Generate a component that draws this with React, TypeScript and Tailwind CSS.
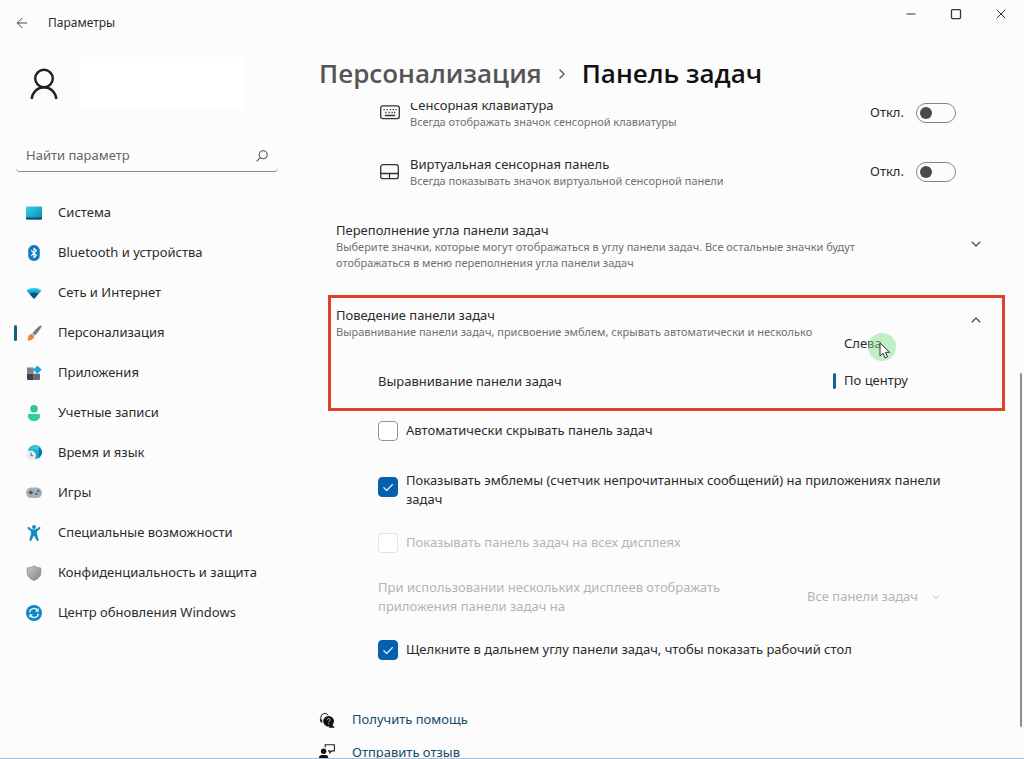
import React, { useState } from 'react'
import { ArrowLeft, ChevronDown, ChevronRight, ChevronUp, Minus, Square, X } from 'lucide-react'

type IconProps = { className?: string }

const SystemIcon = () => (
  <svg viewBox="0 0 16 16" className="size-4">
    <defs>
      <linearGradient id="sys" x1="0" y1="0" x2="1" y2="1">
        <stop offset="0" stopColor="#30d3e6" />
        <stop offset="1" stopColor="#0a86b4" />
      </linearGradient>
    </defs>
    <rect x="0" y="1.5" width="16" height="13" rx="1" fill="url(#sys)" />
    <path d="M0 12.5h16v1a1 1 0 0 1-1 1H1a1 1 0 0 1-1-1z" fill="#0b4f73" />
  </svg>
)

const BluetoothIcon = () => (
  <svg viewBox="0 0 16 16" className="size-4">
    <rect x="2.2" y="0" width="11.6" height="16" rx="5.6" fill="#0c7cc4" />
    <path d="M5.2 5.4l5.3 5L8 12.7V3.3l2.5 2.3-5.3 5" fill="none" stroke="#fff" strokeWidth="1.1" strokeLinejoin="round" />
  </svg>
)

const NetworkIcon = () => (
  <svg viewBox="0 0 16 16" className="size-4">
    <defs>
      <linearGradient id="net" x1="0" y1="0" x2="0" y2="1">
        <stop offset="0" stopColor="#45dcf2" />
        <stop offset=".45" stopColor="#1397cb" />
        <stop offset="1" stopColor="#0a4a80" />
      </linearGradient>
    </defs>
    <path d="M.4 5.600C4.600 1.700 11.400 1.700 15.600 5.600L8.600 13.200a.9.9 0 0 1-1.200 0z" fill="url(#net)" />
    <path d="M3.800 9.100c2.500-1.900 5.900-1.900 8.400 0l-3.600 4.100a.9.9 0 0 1-1.200 0z" fill="#0b5288" />
  </svg>
)

const BrushIcon = () => (
  <svg viewBox="0 0 16 16" className="size-4">
    <path d="M14.200.6c1-.5 1.700.2 1.200 1.200-1.400 2.900-3.500 5.900-6.200 8.400L6.600 7.900C9 5.100 11.600 2.200 14.200.600z" fill="#737d87" />
    <path d="M6.600 7.900l2.600 2.300-1.200 1-2.500-2.200z" fill="#b5bcc2" />
    <path d="M5.600 8.900l2.500 2.300c0 3-3.200 4.700-7.400 4.100 1.500-.900 1.200-2.200 1.700-3.900.5-1.500 1.700-2.400 3.200-2.500z" fill="#ec8332" />
  </svg>
)

const AppsIcon = () => (
  <svg viewBox="0 0 16 16" className="size-4">
    <path d="M1 2.500h6.700v6.200H1z" fill="#7c838a" />
    <path d="M1 8.700h6.700V15H2a1 1 0 0 1-1-1z" fill="#3b434b" />
    <path d="M7.700 8.700H14V14a1 1 0 0 1-1 1H7.700z" fill="#646c74" />
    <path d="M11.400.5l4.200 4.200-4.200 4.200-4.200-4.200z" fill="#1ca7dc" />
  </svg>
)

const AccountsIcon = () => (
  <svg viewBox="0 0 16 16" className="size-4">
    <circle cx="8" cy="3.800" r="3.800" fill="#2fc79a" />
    <path d="M1.800 10.500c0-.9.700-1.500 1.500-1.500h9.400c.8 0 1.500.600 1.500 1.500 0 3.500-2.600 5.500-6.200 5.500s-6.200-2-6.200-5.500z" fill="#27d29c" />
  </svg>
)

const TimeIcon = () => (
  <svg viewBox="0 0 16 16" className="size-4">
    <circle cx="9" cy="7" r="7" fill="#15a5c4" />
    <path d="M9 0a7 7 0 0 1 7 7c0 2.800-1.600 5.200-4 6.300.5-3-1-4.300-.5-6.300.4-1.900-2.300-2.500-4.500-2.600-1.300 0-2.600-.3-3.400-.9A7 7 0 0 1 9 0z" fill="#36c6d8" />
    <path d="M13 2l3 4c.2 3-1.400 6-4 7.300z" fill="#0d76b3" />
    <circle cx="5" cy="10.500" r="5" fill="#e9eef1" />
    <path d="M5 7.500v3.300h2.300" fill="none" stroke="#4c5a66" strokeWidth="1" />
  </svg>
)

const GamesIcon = () => (
  <svg viewBox="0 0 16 16" className="size-4">
    <rect x="0" y="2.500" width="16" height="10.500" rx="5.200" fill="#a5afb9" />
    <path d="M4.800 5.500v4M2.800 7.500h4" stroke="#3f474f" strokeWidth="1.300" />
    <circle cx="12.300" cy="6" r="1.100" fill="#35506a" />
    <circle cx="10.500" cy="9" r="1.100" fill="#48515a" />
  </svg>
)

const AccessibilityIcon = () => (
  <svg viewBox="0 0 16 16" className="size-4">
    <circle cx="8" cy="2.100" r="2" fill="#168cc0" />
    <path
      d="M1.700 2.500c.5-.8 1.200-.6 1.900-.1C4.800 3.500 6.200 4.400 8 4.400s3.200-.9 4.400-2c.7-.5 1.400-.7 1.900.1.400.7 0 1.200-.6 1.700L11 6.300v2.800l1.600 5.300c.2.800-.1 1.300-.7 1.500-.7.200-1.200-.2-1.500-.9L8 10.600 5.600 15c-.3.700-.8 1.100-1.500.9-.6-.2-.9-.7-.7-1.500L5 9.100V6.300L2.300 4.200c-.6-.5-1-1-.6-1.700z"
      fill="#168cc0"
    />
  </svg>
)

const PrivacyIcon = () => (
  <svg viewBox="0 0 16 16" className="size-4">
    <defs>
      <linearGradient id="shield" x1="0" y1="0" x2="1" y2="1">
        <stop offset="0" stopColor="#c9cccd" />
        <stop offset="1" stopColor="#7c8185" />
      </linearGradient>
    </defs>
    <path
      d="M8 .8c2 1.500 4.200 2.100 6.800 2.200v4.500c0 3.900-2.600 6.200-6.800 8-4.200-1.800-6.800-4.100-6.800-8V3C3.800 2.900 6 2.300 8 .8z"
      fill="url(#shield)"
      stroke="#85898c"
      strokeWidth=".8"
    />
  </svg>
)

const UpdateIcon = () => (
  <svg viewBox="0 0 16 16" className="size-4">
    <circle cx="8" cy="8" r="8" fill="#0e86c6" />
    <path d="M3.600 7.400A4.500 4.500 0 0 1 11.800 5.500M12.400 8.600A4.500 4.500 0 0 1 4.200 10.500" fill="none" stroke="#d9f4ff" strokeWidth="1.500" />
    <path d="M12.700 3v3.700H9zM3.300 13V9.300H7z" fill="#d9f4ff" />
  </svg>
)

const UserIcon = ({ className }: IconProps) => (
  <svg viewBox="0 0 28 32" className={className} fill="none" stroke="#1f1f1f" strokeWidth="2.400">
    <circle cx="14" cy="10.500" r="8.800" />
    <path d="M1.600 31c.8-6.500 5.800-11.700 12.400-11.700S25.600 24.500 26.400 31" />
  </svg>
)

const SearchIcon = ({ className }: IconProps) => (
  <svg viewBox="0 0 12 12" className={className} fill="none" stroke="#555" strokeWidth="1.100" strokeLinecap="round">
    <circle cx="7.200" cy="4.700" r="4" />
    <path d="M4.200 7.700L.9 11.200" />
  </svg>
)

const KeyboardIcon = () => (
  <svg viewBox="0 0 20 16" className="h-4 w-5" fill="none" stroke="#333" strokeWidth="1.300">
    <rect x=".7" y=".8" width="18.600" height="12.800" rx="2" />
    <path d="M3.500 4.600h1.300M6.700 4.600H8M9.900 4.600h1.300M12.700 4.600H14M15.400 4.600h1.200M5.200 7.500h1.300M8.500 7.500h1.300M11.500 7.500h1.300M14 7.500h1.300M4.800 10.500h10.400" />
  </svg>
)

const TouchpadIcon = () => (
  <svg viewBox="0 0 20 16" className="h-4 w-5" fill="none" stroke="#333" strokeWidth="1.300">
    <rect x=".7" y=".7" width="17.600" height="14" rx="2.300" />
    <path d="M.7 9.500h17.600M9.500 9.500v5" />
  </svg>
)

const HelpIcon = () => (
  <svg viewBox="0 0 16 16" className="size-4">
    <path d="M1.800 9V5.500a4 4 0 0 1 7.500-2" fill="none" stroke="#222" strokeWidth="1" />
    <path d="M.6 7.500h2.600v3.300H2z" fill="#222" />
    <circle cx="9.600" cy="9.300" r="5.400" fill="#111" />
    <path d="M12.500 12l3.300 3.800h-6z" fill="#111" />
    <path d="M8.200 7.900c0-2 3-1.900 3-.1 0 1.200-1.500 1.100-1.500 2.300M9.700 11.200v1.100" fill="none" stroke="#ccc" strokeWidth="1" />
  </svg>
)

const FeedbackIcon = () => (
  <svg viewBox="0 0 16 18" className="h-[18px] w-4">
    <path d="M6.200 3.500V.7h9.200v6.200h-2.600l-2 2v-2H9" fill="none" stroke="#222" strokeWidth="1.100" />
    <circle cx="4.600" cy="7.200" r="2.700" fill="#111" />
    <path d="M0 18v-4A3 3 0 0 1 3 11h3.300a3 3 0 0 1 3 3v4z" fill="#111" />
  </svg>
)

const CursorIcon = ({ className }: IconProps) => (
  <svg viewBox="0 0 12 17" className={className}>
    <path d="M1 1v13l3-2.800 2 4.700 2.500-1-2-4.600h4.200z" fill="#fff" stroke="#333" strokeWidth="1" strokeLinejoin="round" />
  </svg>
)

const navItems = [
  { label: 'Система', icon: SystemIcon },
  { label: 'Bluetooth и устройства', icon: BluetoothIcon },
  { label: 'Сеть и Интернет', icon: NetworkIcon },
  { label: 'Персонализация', icon: BrushIcon, active: true },
  { label: 'Приложения', icon: AppsIcon },
  { label: 'Учетные записи', icon: AccountsIcon },
  { label: 'Время и язык', icon: TimeIcon },
  { label: 'Игры', icon: GamesIcon },
  { label: 'Специальные возможности', icon: AccessibilityIcon },
  { label: 'Конфиденциальность и защита', icon: PrivacyIcon },
  { label: 'Центр обновления Windows', icon: UpdateIcon },
]

const TitleBar = () => (
  <header className="flex h-[46px] shrink-0 items-start justify-between">
    <div className="flex h-full items-center gap-[18px] pl-3.5">
      <button aria-label="Назад">
        <ArrowLeft className="size-4 text-[#444]" strokeWidth={1.5} />
      </button>
      <span className="text-xs">Параметры</span>
    </div>
    <div className="flex h-7 pr-px text-[#333]">
      <button aria-label="Свернуть" className="flex w-[45px] items-center justify-center">
        <Minus className="size-3.5" strokeWidth={1.8} />
      </button>
      <button aria-label="Развернуть" className="flex w-[45px] items-center justify-center">
        <Square className="size-3" strokeWidth={2.5} />
      </button>
      <button aria-label="Закрыть" className="flex w-[45px] items-center justify-center">
        <X className="size-4" strokeWidth={1.5} />
      </button>
    </div>
  </header>
)

const Sidebar = () => (
  <aside className="flex w-[300px] shrink-0 flex-col pl-3.5 pr-[22px]">
    <div className="mt-[11px] flex h-[53px] items-center pl-4">
      <UserIcon className="h-8 w-7" />
      <div className="ml-[22px] h-full w-[165px] bg-white" />
    </div>
    <div className="ml-0.5 mt-[30px] flex h-8 items-center rounded-b border-b border-[#8a8a8a] pl-2.5 pr-2.5">
      <input
        type="search"
        aria-label="Найти параметр"
        placeholder="Найти параметр"
        className="min-w-0 flex-1 bg-transparent outline-none placeholder:text-[#666]"
      />
      <SearchIcon className="size-3" />
    </div>
    <nav className="mt-[21px]">
      {navItems.map(({ label, icon: Icon, active }) => (
        <a key={label} href="#" className="flex h-10 items-center">
          <span className={active ? 'h-4 w-[3px] rounded bg-[#14607f]' : 'h-4 w-[3px]'} />
          <span className="ml-[9px] mr-4">
            <Icon />
          </span>
          {label}
        </a>
      ))}
    </nav>
  </aside>
)

type ToggleRowProps = { icon: React.ReactNode; title: string; text: string }

const ToggleRow: React.FC<ToggleRowProps> = ({ icon, title, text }) => (
  <label className="flex h-[59px] items-center pl-[52px] pr-12">
    {icon}
    <span className="ml-2.5 flex flex-1 flex-col">
      <span className="leading-[18px]">{title}</span>
      <span className="text-[11px] leading-4 text-[#707070]">{text}</span>
    </span>
    <span className="mr-3">Откл.</span>
    <input
      type="checkbox"
      role="switch"
      className="flex h-5 w-10 appearance-none items-center rounded-full border border-[#858585] px-[3px] before:size-3 before:rounded-full before:bg-[#4b4b4b] checked:justify-end"
    />
  </label>
)

type CheckRowProps = { label: string; checked?: boolean; disabled?: boolean; twoLines?: boolean }

const CheckRow: React.FC<CheckRowProps> = ({ label, checked, disabled, twoLines }) => (
  <label className={disabled ? 'flex gap-2 text-[#b4b4b4]' : 'flex gap-2'}>
    <span className={twoLines ? 'mt-1.5 grid size-5 shrink-0' : 'grid size-5 shrink-0'}>
      <input
        type="checkbox"
        defaultChecked={checked}
        disabled={disabled}
        className="peer col-start-1 row-start-1 size-5 appearance-none rounded border border-[#949494] bg-white checked:border-[#0560ae] checked:bg-[#0560ae] disabled:border-[#e2e2e2]"
      />
      <svg viewBox="0 0 20 20" className="pointer-events-none invisible col-start-1 row-start-1 size-5 peer-checked:visible">
        <path d="M5.500 10.300l3.200 3.200 6-6.300" fill="none" stroke="#d5eeff" strokeWidth="1.300" />
      </svg>
    </span>
    <span className="leading-[19px]">{label}</span>
  </label>
)

const AlignmentMenu = () => {
  const [value, setValue] = useState('По центру')

  return (
    <div role="listbox" aria-label="Выравнивание панели задач" className="absolute right-9 top-[27px] w-[138px] bg-[#fcfcfc]">
      {['Слева', 'По центру'].map((option) => (
        <button
          key={option}
          role="option"
          aria-selected={option === value}
          onClick={() => setValue(option)}
          className="flex h-[37px] w-full items-center gap-2 pl-[5px]"
        >
          <span className={option === value ? 'h-4 w-[3px] rounded bg-[#0f6599]' : 'h-4 w-[3px]'} />
          {option}
        </button>
      ))}
      <span className="pointer-events-none absolute left-10 top-2 size-7 rounded-full bg-[#86e08f]/50" />
      <CursorIcon className="pointer-events-none absolute left-[51px] top-[17px] h-[17px] w-3" />
    </div>
  )
}

const TaskbarBehavior = () => (
  <section className="relative mt-[5px] -mr-px flex h-[116px] flex-col border-3 border-[#e1402b] px-[5px] pt-2">
    <div className="flex pr-[13px]">
      <div className="min-w-0 flex-1">
        <h2 className="leading-[18px]">Поведение панели задач</h2>
        <p className="overflow-hidden whitespace-nowrap text-[11px] leading-4 text-[#707070]">
          Выравнивание панели задач, присвоение эмблем, скрывать автоматически и несколько
        </p>
      </div>
      <button aria-label="Свернуть раздел" className="h-7">
        <ChevronUp className="size-4 text-[#444]" strokeWidth={1.6} />
      </button>
    </div>
    <p className="mt-8 pl-[42px] leading-[19px]">Выравнивание панели задач</p>
    <AlignmentMenu />
  </section>
)

const TaskbarPage = () => (
  <main className="flex min-w-0 flex-1 flex-col">
    <h1 className="flex h-[57px] shrink-0 items-center gap-3 pb-0.5 pl-[19px] font-['Open_Sans'] text-[26px] font-semibold">
      <a href="#" className="text-[#555]">Персонализация</a>
      <ChevronRight className="size-4 text-[#555]" strokeWidth={2} />
      <span className="text-[#111]">Панель задач</span>
    </h1>
    <div className="flex min-h-0 flex-1">
      <div className="min-w-0 flex-1 overflow-hidden pl-7 pr-px -mr-px">
        <div className="-mt-5">
          <ToggleRow icon={<KeyboardIcon />} title="Сенсорная клавиатура" text="Всегда отображать значок сенсорной клавиатуры" />
          <ToggleRow icon={<TouchpadIcon />} title="Виртуальная сенсорная панель" text="Всегда показывать значок виртуальной сенсорной панели" />
        </div>
        <section className="flex h-[89px] items-center justify-between pl-2 pr-5">
          <div className="max-w-[550px]">
            <h2 className="leading-[18px]">Переполнение угла панели задач</h2>
            <p className="text-[11px] leading-4 text-[#707070]">
              Выберите значки, которые могут отображаться в углу панели задач. Все остальные значки будут отображаться в меню переполнения угла панели задач
            </p>
          </div>
          <button aria-label="Развернуть раздел" className="pb-1">
            <ChevronDown className="size-4 text-[#444]" strokeWidth={1.6} />
          </button>
        </section>
        <TaskbarBehavior />
        <div className="mt-2.5 flex flex-col gap-6 pl-[50px] pr-12">
          <div className="mb-1.5">
            <CheckRow label="Автоматически скрывать панель задач" />
          </div>
          <CheckRow checked twoLines label="Показывать эмблемы (счетчик непрочитанных сообщений) на приложениях панели задач" />
          <CheckRow disabled label="Показывать панель задач на всех дисплеях" />
          <div className="flex items-center justify-between pt-px text-[#b4b4b4]">
            <label htmlFor="displays" className="w-[360px] leading-[19px]">
              При использовании нескольких дисплеев отображать приложения панели задач на
            </label>
            <span className="flex items-center pr-3.5">
              <select id="displays" disabled className="w-[123px] appearance-none bg-transparent">
                <option>Все панели задач</option>
              </select>
              <ChevronDown className="size-3" strokeWidth={2} />
            </span>
          </div>
          <CheckRow checked label="Щелкните в дальнем углу панели задач, чтобы показать рабочий стол" />
        </div>
        <div className="-ml-[9px] mt-[43px] text-[#154a68]">
          <a href="#" className="flex h-[33px] items-center gap-[17px]">
            <HelpIcon />
            Получить помощь
          </a>
          <a href="#" className="flex h-[33px] items-center gap-[17px]">
            <FeedbackIcon />
            Отправить отзыв
          </a>
        </div>
      </div>
      <div className="flex w-5 flex-col items-end pr-0.5">
        <div className="flex-[270]" />
        <div className="w-0.5 flex-[355] rounded bg-[#8d8d8d]" />
        <div className="flex-[31]" />
      </div>
    </div>
  </main>
)

export default function App() {
  return (
    <div className="flex h-screen flex-col overflow-hidden border-b border-[#a9bcd8] bg-[#fcfcfc] font-['Noto_Sans','Open_Sans',sans-serif] text-[13px] text-[#2b2b2b]">
      <TitleBar />
      <div className="flex min-h-0 flex-1">
        <Sidebar />
        <TaskbarPage />
      </div>
    </div>
  )
}
